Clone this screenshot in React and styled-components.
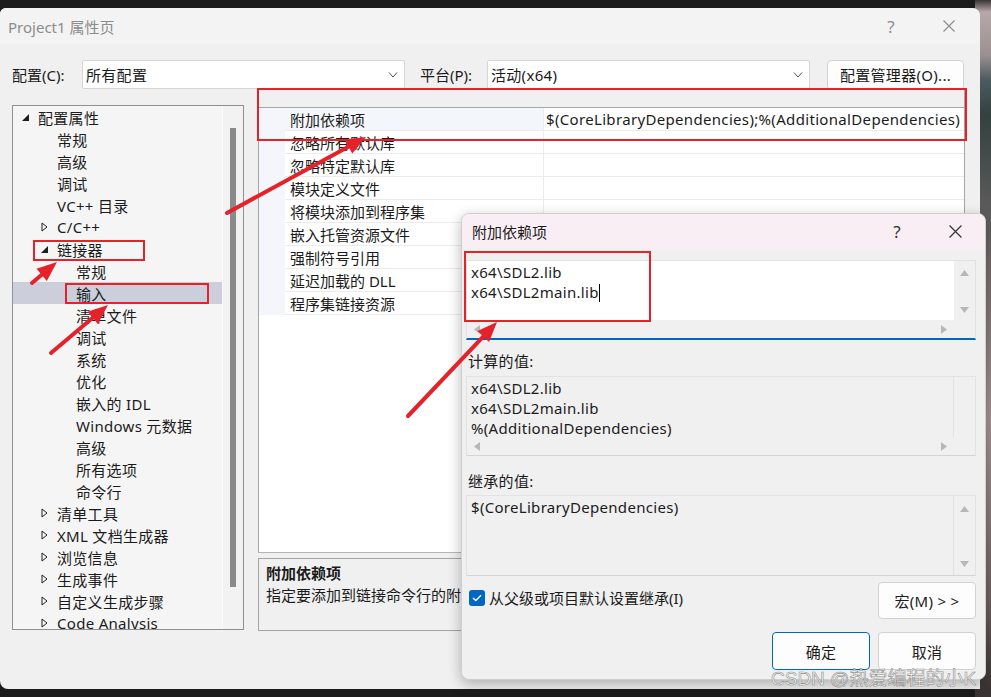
import React from 'react'
import styled, { createGlobalStyle } from 'styled-components'

const FONT = `"Noto Sans", "Noto Sans CJK SC", sans-serif`
const RED = '#e5212a'

const GlobalStyle = createGlobalStyle`
  html, body {
    margin: 0;
    padding: 0;
    background: #1c1c1c;
  }
  body {
    font-family: ${FONT};
  }
`

const Desktop = styled.div`
  position: relative;
  width: 991px;
  height: 697px;
  box-sizing: border-box;
  padding-top: 8px;
  overflow: hidden;
  font-family: ${FONT};
  font-size: 15px;
  letter-spacing: 0.3px;
  color: #1b1b1b;
  background:
    linear-gradient(180deg, #3a3434 0, #b7a8aa 12px, #9b9091 55px, #4c5b5e 80px, #33413f 115px, #72696a 260px, #a39495 420px, #6d6262 600px, #3a3434 690px)
      right top / 16px 100% no-repeat,
    #1c1c1c;
`

const MainWindow = styled.div`
  width: 980px;
  height: 681px;
  background: #f0f0f0;
  border-radius: 6px 8px 0 8px;
  display: flex;
  flex-direction: column;
  overflow: hidden;
`

const TitleBar = styled.div`
  height: 36px;
  flex: none;
  display: flex;
  align-items: center;
  padding: 0 8px 0 8px;
  background: #f3f3f3;
  color: #8c8c8c;
`

const TitleText = styled.div`
  flex: 1;
  font-size: 15px;
  letter-spacing: 0;
`

const TitleButton = styled.div`
  width: 46px;
  margin-left: ${p => p.$ml || 0}px;
  display: flex;
  justify-content: center;
  align-items: center;
  color: ${p => p.$color || '#8c8c8c'};
  font-size: 17px;
`

const Body = styled.div`
  flex: 1;
  padding: 16px 0 0 12px;
  display: flex;
  flex-direction: column;
`

const ConfigRow = styled.div`
  display: flex;
  align-items: center;
  height: 29px;
`

const FieldLabel = styled.div`
  width: ${p => p.$w}px;
  margin-left: ${p => p.$ml || 0}px;
  white-space: nowrap;
  letter-spacing: 0;
`

const Combo = styled.div`
  width: 323px;
  height: 29px;
  box-sizing: border-box;
  background: #fff;
  border: 1px solid #d6d6d6;
  border-radius: 2px;
  display: flex;
  align-items: center;
  padding: 0 6px 0 3px;
`

const ComboText = styled.div`
  flex: 1;
`

const PushButton = styled.div`
  width: ${p => p.$w}px;
  height: ${p => p.$h}px;
  margin-left: ${p => p.$ml || 0}px;
  box-sizing: border-box;
  background: #fdfdfd;
  border: ${p => (p.$primary ? '1.5px solid #0067c0' : '1px solid #d2d2d2')};
  border-radius: 4px;
  display: flex;
  align-items: center;
  justify-content: center;
  white-space: pre;
`

const Content = styled.div`
  display: flex;
  align-items: flex-start;
`

const TreePanel = styled.div`
  margin-top: 16px;
  width: 232px;
  height: 525px;
  box-sizing: border-box;
  border: 1px solid #8d9096;
  background: #f5f5f5;
  display: flex;
  overflow: hidden;
`

const TreeList = styled.div`
  width: 209px;
  border-right: 1px solid #fbfbfb;
  overflow: hidden;
`

const TreeRow = styled.div`
  height: 22px;
  display: flex;
  align-items: center;
  padding-left: ${p => 9 + p.$level * 19}px;
  background: ${p => (p.$selected ? '#cccedb' : 'transparent')};
  white-space: nowrap;
`

const Expander = styled.div`
  width: 16px;
  flex: none;
  display: flex;
  align-items: center;
`

const ScrollTrack = styled.div`
  flex: 1;
  padding: 22px 7px 0 7px;
  background: #f2f2f2;
`

const ScrollThumb = styled.div`
  width: 6px;
  height: 459px;
  background: #8a8a8a;
`

const RightColumn = styled.div`
  margin-left: 14px;
  width: 707px;
  display: flex;
  flex-direction: column;
`

const Grid = styled.div`
  height: 464px;
  box-sizing: border-box;
  border: 1px solid #a5a5a5;
  border-bottom-color: #b5b5b5;
  background: #fff;
`

const GridHeader = styled.div`
  height: 17px;
  background: #f0f0f0;
  border-bottom: 1px solid #a8a8a8;
`

const GridRow = styled.div`
  display: grid;
  grid-template-columns: 26px 258px 1fr;
  height: 23px;
`

const Gutter = styled.div`
  background: #f4f6fb;
`

const Cell = styled.div`
  display: flex;
  align-items: center;
  padding-left: ${p => p.$pl}px;
  border-bottom: 1px solid #ececec;
  border-left: ${p => (p.$divider ? '1px solid #ececec' : 'none')};
  background: ${p => (p.$active ? '#f3f6fb' : '#fff')};
  white-space: nowrap;
  overflow: hidden;
  letter-spacing: ${p => p.$ls ?? 0.3}px;
`

const DescPanel = styled.div`
  margin-top: 5px;
  height: 73px;
  box-sizing: border-box;
  border: 1px solid #a5a5a5;
  padding: 3px 7px;
  line-height: 22px;
  letter-spacing: 0;
`

const DescTitle = styled.div`
  font-weight: 700;
`

const Dialog = styled.div`
  position: absolute;
  left: 461px;
  top: 213px;
  width: 525px;
  height: 467px;
  box-sizing: border-box;
  background: #f0f0f0;
  border: 1px solid #cfcfcf;
  border-radius: 8px;
  box-shadow: 0 4px 14px rgba(0, 0, 0, 0.28);
  display: flex;
  flex-direction: column;
  overflow: hidden;
`

const DialogTitle = styled.div`
  height: 35px;
  flex: none;
  display: flex;
  align-items: center;
  padding: 0 7px 0 10px;
  background: #f9eef3;
`

const DialogBody = styled.div`
  padding: 11px 9px 0 4px;
  display: flex;
  flex-direction: column;
`

const TextBox = styled.div`
  display: grid;
  grid-template-columns: 1fr 21px;
  grid-template-rows: ${p => (p.$hscroll ? '1fr 18px' : '1fr')};
  height: ${p => p.$h}px;
  box-sizing: border-box;
  border: 1px solid #e2e2e2;
  border-bottom: ${p => (p.$active ? '2px solid #0067c0' : '1px solid #d4d4d4')};
  background: #f0f0f0;
  margin-top: ${p => p.$mt || 0}px;
`

const TextArea = styled.div`
  padding: 1px 4px;
  line-height: 20px;
  background: ${p => (p.$white ? '#fff' : '#f0f0f0')};
  border-right: 1px solid ${p => (p.$white ? '#fff' : '#e2e2e2')};
  white-space: pre;
  overflow: hidden;
`

const VScroll = styled.div`
  display: flex;
  flex-direction: column;
  justify-content: space-between;
  align-items: center;
  padding: ${p => p.$pad};
`

const HScroll = styled.div`
  display: flex;
  justify-content: space-between;
  align-items: center;
  padding: 0 7px 0 7px;
`

const Caret = styled.span`
  display: inline-block;
  width: 1px;
  height: 18px;
  background: #000;
  vertical-align: -4px;
`

const SectionLabel = styled.div`
  margin-top: ${p => p.$mt}px;
  height: 20px;
  line-height: 20px;
  padding-left: 2px;
`

const BottomRow = styled.div`
  display: flex;
  align-items: center;
  margin-top: ${p => p.$mt}px;
  padding-left: 3px;
`

const CheckLabel = styled.label`
  flex: 1;
  display: flex;
  align-items: center;
  gap: 4px;
  margin-top: -6px;
  letter-spacing: 0;
`

const CheckBox = styled.span`
  width: 16px;
  height: 16px;
  border-radius: 3px;
  background: #0067c0;
  display: flex;
  align-items: center;
  justify-content: center;
`

const ButtonRow = styled.div`
  display: flex;
  justify-content: flex-end;
  gap: 8px;
  margin-top: 13px;
`

const Watermark = styled.div`
  position: absolute;
  left: 771px;
  top: 663px;
  font-size: 19px;
  font-family: "Liberation Sans", "Noto Sans CJK SC", sans-serif;
  color: rgba(255, 255, 255, 0.88);
  -webkit-text-stroke: 0.6px #8d8d8d;
  letter-spacing: 0;
  white-space: nowrap;
`

const Overlay = styled.svg`
  position: absolute;
  left: 0;
  top: 0;
  pointer-events: none;
`

const Chevron = () => (
  <svg width="10" height="6" viewBox="0 0 10 6">
    <path d="M1 0.5 L5 5 L9 0.5" fill="none" stroke="#555" strokeWidth="1" />
  </svg>
)

const CloseGlyph = ({ size, color }) => (
  <svg width={size} height={size} viewBox="0 0 12 12">
    <path d="M0.5 0.5 L11.5 11.5 M11.5 0.5 L0.5 11.5" stroke={color} strokeWidth="1.1" />
  </svg>
)

const ExpandedGlyph = () => (
  <svg width="7" height="7" viewBox="0 0 7 7">
    <polygon points="7,0 7,7 0,7" fill="#1e1e1e" />
  </svg>
)

const CollapsedGlyph = () => (
  <svg width="7" height="10" viewBox="0 0 7 10">
    <polygon points="1,1 6,5 1,9" fill="none" stroke="#1e1e1e" strokeWidth="1" />
  </svg>
)

const Tri = ({ dir }) => {
  const pts = {
    up: '0,6 4.5,0 9,6',
    down: '0,0 9,0 4.5,6',
    left: '6,0 6,9 0,4.5',
    right: '0,0 6,4.5 0,9'
  }[dir]
  const w = dir === 'up' || dir === 'down' ? 9 : 6
  const h = dir === 'up' || dir === 'down' ? 6 : 9
  return (
    <svg width={w} height={h} viewBox={`0 0 ${w} ${h}`}>
      <polygon points={pts} fill="#b7b7b7" />
    </svg>
  )
}

const Arrow = ({ from, to }) => {
  const dx = to[0] - from[0]
  const dy = to[1] - from[1]
  const len = Math.hypot(dx, dy)
  const ux = dx / len
  const uy = dy / len
  const L = 20
  const W = 8
  const bx = to[0] - ux * L
  const by = to[1] - uy * L
  const head = [
    [to[0], to[1]],
    [bx - uy * W, by + ux * W],
    [bx + uy * W, by - ux * W]
  ]
    .map(p => p.join(','))
    .join(' ')
  return (
    <g>
      <line x1={from[0]} y1={from[1]} x2={bx + ux * 2} y2={by + uy * 2} stroke={RED} strokeWidth="4" strokeLinecap="round" />
      <polygon points={head} fill={RED} />
    </g>
  )
}

const tree = [
  { label: '配置属性', level: 0, exp: 'open' },
  { label: '常规', level: 1 },
  { label: '高级', level: 1 },
  { label: '调试', level: 1 },
  { label: 'VC++ 目录', level: 1 },
  { label: 'C/C++', level: 1, exp: 'closed' },
  { label: '链接器', level: 1, exp: 'open' },
  { label: '常规', level: 2 },
  { label: '输入', level: 2, selected: true },
  { label: '清单文件', level: 2 },
  { label: '调试', level: 2 },
  { label: '系统', level: 2 },
  { label: '优化', level: 2 },
  { label: '嵌入的 IDL', level: 2 },
  { label: 'Windows 元数据', level: 2 },
  { label: '高级', level: 2 },
  { label: '所有选项', level: 2 },
  { label: '命令行', level: 2 },
  { label: '清单工具', level: 1, exp: 'closed' },
  { label: 'XML 文档生成器', level: 1, exp: 'closed' },
  { label: '浏览信息', level: 1, exp: 'closed' },
  { label: '生成事件', level: 1, exp: 'closed' },
  { label: '自定义生成步骤', level: 1, exp: 'closed' },
  { label: 'Code Analysis', level: 1, exp: 'closed' }
]

const props = [
  ['附加依赖项', '$(CoreLibraryDependencies);%(AdditionalDependencies)'],
  ['忽略所有默认库', ''],
  ['忽略特定默认库', ''],
  ['模块定义文件', ''],
  ['将模块添加到程序集', ''],
  ['嵌入托管资源文件', ''],
  ['强制符号引用', ''],
  ['延迟加载的 DLL', ''],
  ['程序集链接资源', '']
]

export default function App() {
  return (
    <Desktop>
      <GlobalStyle />
      <MainWindow>
        <TitleBar>
          <TitleText>Project1 属性页</TitleText>
          <TitleButton>?</TitleButton>
          <TitleButton $ml={12}>
            <CloseGlyph size={12} color="#8c8c8c" />
          </TitleButton>
        </TitleBar>
        <Body>
          <ConfigRow>
            <FieldLabel $w={70}>配置(C):</FieldLabel>
            <Combo>
              <ComboText>所有配置</ComboText>
              <Chevron />
            </Combo>
            <FieldLabel $w={67} $ml={15}>平台(P):</FieldLabel>
            <Combo>
              <ComboText>活动(x64)</ComboText>
              <Chevron />
            </Combo>
            <PushButton $w={137} $h={30} $ml={17}>配置管理器(O)...</PushButton>
          </ConfigRow>
          <Content>
            <TreePanel>
              <TreeList>
                {tree.map((item, i) => (
                  <TreeRow key={i} $level={item.level} $selected={item.selected}>
                    <Expander>
                      {item.exp === 'open' && <ExpandedGlyph />}
                      {item.exp === 'closed' && <CollapsedGlyph />}
                    </Expander>
                    {item.label}
                  </TreeRow>
                ))}
              </TreeList>
              <ScrollTrack>
                <ScrollThumb />
              </ScrollTrack>
            </TreePanel>
            <RightColumn>
              <Grid>
                <GridHeader />
                {props.map(([name, value], i) => (
                  <GridRow key={i}>
                    <Gutter />
                    <Cell $pl={5} $ls={0} $active={i === 0}>{name}</Cell>
                    <Cell $pl={2} $divider $ls={0.33}>{value}</Cell>
                  </GridRow>
                ))}
              </Grid>
              <DescPanel>
                <DescTitle>附加依赖项</DescTitle>
                <div>指定要添加到链接命令行的附加项</div>
              </DescPanel>
            </RightColumn>
          </Content>
        </Body>
      </MainWindow>

      <Dialog>
        <DialogTitle>
          <TitleText>附加依赖项</TitleText>
          <TitleButton $color="#333">?</TitleButton>
          <TitleButton $ml={12}>
            <CloseGlyph size={13} color="#333" />
          </TitleButton>
        </DialogTitle>
        <DialogBody>
          <TextBox $h={80} $hscroll $active>
            <TextArea $white>
              {'x64\\SDL2.lib\nx64\\SDL2main.lib'}
              <Caret />
            </TextArea>
            <VScroll $pad="9px 0 7px">
              <Tri dir="up" />
              <Tri dir="down" />
            </VScroll>
            <HScroll>
              <Tri dir="left" />
              <Tri dir="right" />
            </HScroll>
            <div />
          </TextBox>
          <SectionLabel $mt={11}>计算的值:</SectionLabel>
          <TextBox $h={80} $hscroll $mt={5}>
            <TextArea>{'x64\\SDL2.lib\nx64\\SDL2main.lib\n%(AdditionalDependencies)'}</TextArea>
            <VScroll />
            <HScroll>
              <Tri dir="left" />
              <Tri dir="right" />
            </HScroll>
            <div />
          </TextBox>
          <SectionLabel $mt={15}>继承的值:</SectionLabel>
          <TextBox $h={81} $mt={4}>
            <TextArea>{'$(CoreLibraryDependencies)'}</TextArea>
            <VScroll $pad="10px 0 8px">
              <Tri dir="up" />
              <Tri dir="down" />
            </VScroll>
          </TextBox>
          <BottomRow $mt={6}>
            <CheckLabel>
              <CheckBox>
                <svg width="10" height="8" viewBox="0 0 10 8">
                  <path d="M1 4 L3.8 6.6 L9 1.2" fill="none" stroke="#fff" strokeWidth="1.4" />
                </svg>
              </CheckBox>
              从父级或项目默认设置继承(I)
            </CheckLabel>
            <PushButton $w={98} $h={37}>{'宏(M) > >'}</PushButton>
          </BottomRow>
          <ButtonRow>
            <PushButton $w={98} $h={38} $primary>确定</PushButton>
            <PushButton $w={98} $h={38}>取消</PushButton>
          </ButtonRow>
        </DialogBody>
      </Dialog>

      <Watermark>CSDN @热爱编程的小K</Watermark>

      <Overlay width="991" height="697" viewBox="0 0 991 697">
        <rect x="258" y="89" width="708" height="51" fill="none" stroke={RED} strokeWidth="2" />
        <rect x="34" y="241" width="110" height="19" fill="none" stroke={RED} strokeWidth="2" />
        <rect x="66" y="284" width="142" height="19" fill="none" stroke={RED} strokeWidth="2" />
        <rect x="465" y="252" width="185" height="69" fill="none" stroke={RED} strokeWidth="2" />
        <Arrow from={[227, 213]} to={[366, 137]} />
        <Arrow from={[32, 283]} to={[57, 262]} />
        <Arrow from={[51, 353]} to={[108, 305]} />
        <Arrow from={[408, 416]} to={[497, 322]} />
      </Overlay>
    </Desktop>
  )
}
